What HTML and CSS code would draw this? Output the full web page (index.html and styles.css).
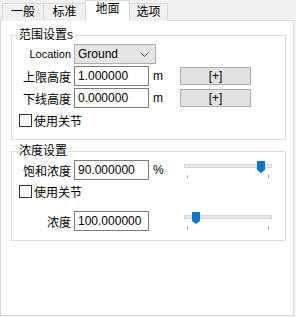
FILE: index.html
```html
<!DOCTYPE html>
<html lang="zh">
<head>
    <meta charset="UTF-8">
    <title>地面</title>
    <link rel="stylesheet" href="styles.css">
</head>
<body>
    <div class="tabs">
        <div class="tab t1">一般</div>
        <div class="tab t2">标准</div>
        <div class="tab t3 active">地面</div>
        <div class="tab t4">选项</div>
    </div>
    <div class="panel">
        <fieldset class="group g1">
            <legend>范围设置s</legend>
            <div class="row r-combo">
                <span class="lbl latin">Location</span>
                <div class="combo">
                    <span>Ground</span>
                    <svg class="chev" width="9" height="5" viewBox="0 0 9 5"><path d="M0.5 0.5L4.5 4.5L8.5 0.5" fill="none" stroke="#606060"/></svg>
                </div>
            </div>
            <div class="row r-h1">
                <span class="lbl">上限高度</span>
                <input class="tb" value="1.000000">
                <span class="unit">m</span>
                <button class="btn">[+]</button>
            </div>
            <div class="row r-h2">
                <span class="lbl">下线高度</span>
                <input class="tb" value="0.000000">
                <span class="unit">m</span>
                <button class="btn">[+]</button>
            </div>
            <div class="check-row c1">
                <span class="check"></span>
                <span>使用关节</span>
            </div>
        </fieldset>

        <fieldset class="group g2">
            <legend>浓度设置</legend>
            <div class="row r-sat">
                <span class="lbl">饱和浓度</span>
                <input class="tb" value="90.000000">
                <span class="unit">%</span>
                <svg class="slider" width="92" height="21" viewBox="0 0 92 21">
                    <rect x="0.5" y="5.5" width="87" height="3" fill="#e7eaea" stroke="#d6d6d6"/>
                    <line x1="3.5" y1="16" x2="3.5" y2="20" stroke="#b4b4b4"/>
                    <line x1="84.5" y1="16" x2="84.5" y2="20" stroke="#b4b4b4"/>
                    <path d="M73 2H81V11L77 14L73 11Z" fill="#0078d7"/>
                </svg>
            </div>
            <div class="check-row c2">
                <span class="check"></span>
                <span>使用关节</span>
            </div>
            <div class="row r-den">
                <span class="lbl">浓度</span>
                <input class="tb" value="100.000000">
                <span class="unit"></span>
                <svg class="slider" width="92" height="21" viewBox="0 0 92 21">
                    <rect x="0.5" y="5.5" width="87" height="3" fill="#e7eaea" stroke="#d6d6d6"/>
                    <line x1="3.5" y1="16" x2="3.5" y2="20" stroke="#b4b4b4"/>
                    <line x1="84.5" y1="16" x2="84.5" y2="20" stroke="#b4b4b4"/>
                    <path d="M8 2H16V11L12 14L8 11Z" fill="#0078d7"/>
                </svg>
            </div>
        </fieldset>
    </div>
</body>
</html>
```

FILE: styles.css
```css
body {
    margin: 0;
    background: #f0f0f0;
    font-family: "Liberation Sans", "Noto Sans CJK SC", sans-serif;
    font-size: 12px;
    color: #000;
}
.tabs {
    display: flex;
    align-items: flex-end;
    height: 21px;
    padding-left: 2px;
}
.tab {
    box-sizing: border-box;
    height: 18px;
    line-height: 17px;
    margin-right: -1px;
    border: 1px solid #d9d9d9;
    border-bottom: none;
    background: #f0f0f0;
    text-align: center;
}
.t1 { width: 42px; }
.t2 { width: 43px; }
.t3 { width: 45px; }
.t4 { width: 39px; }
.tab.active {
    position: relative;
    z-index: 1;
    height: 21px;
    line-height: 17px;
    background: #fff;
}
.panel {
    box-sizing: border-box;
    width: 294px;
    height: 296px;
    margin-top: -1px;
    border: 1px solid #d9d9d9;
    background: #fff;
    padding-top: 1px;
}
.group {
    box-sizing: border-box;
    width: 275px;
    min-width: 0;
    margin: 5px 0 0 10px;
    padding: 0 0 12px 0;
    border: 1px solid #dcdcdc;
}
.g2 {
    margin-top: 3px;
    padding-bottom: 9px;
}
.group legend {
    margin-left: 5px;
    padding: 0 2px;
    line-height: 16px;
}
.row {
    display: flex;
    align-items: center;
    height: 20px;
}
.lbl {
    width: 59px;
    text-align: right;
    margin-right: 3px;
}
.latin {
    font-size: 11px;
}
.r-combo { margin-top: 1px; }
.r-h1 { margin-top: 2px; }
.r-h2 { margin-top: 2px; }
.combo {
    box-sizing: border-box;
    display: flex;
    align-items: center;
    justify-content: space-between;
    width: 82px;
    height: 20px;
    padding: 0 6px 0 3px;
    border: 1px solid #adadad;
    background: #e5e5e5;
}
.tb {
    box-sizing: border-box;
    width: 75px;
    height: 20px;
    margin: 0;
    padding: 0 3px;
    border: 1px solid #7a7a7a;
    font: inherit;
    color: #000;
    outline: none;
}
.unit {
    width: 27px;
    margin-left: 4px;
}
.btn {
    box-sizing: border-box;
    width: 71px;
    height: 18px;
    margin: 0;
    padding: 0;
    border: 1px solid #adadad;
    background: #e1e1e1;
    font: inherit;
    color: #000;
}
.check-row {
    display: flex;
    align-items: center;
    height: 14px;
    margin-left: 7px;
}
.c1 { margin-top: 5px; }
.c2 { margin-top: 4px; }
.check {
    box-sizing: border-box;
    width: 13px;
    height: 13px;
    margin-right: 2px;
    border: 1px solid #333;
    background: #fff;
}
.r-sat { margin-top: 1px; }
.r-den { margin-top: 13px; }
.slider {
    align-self: flex-start;
    margin: -1px 0 0 4px;
}
```
